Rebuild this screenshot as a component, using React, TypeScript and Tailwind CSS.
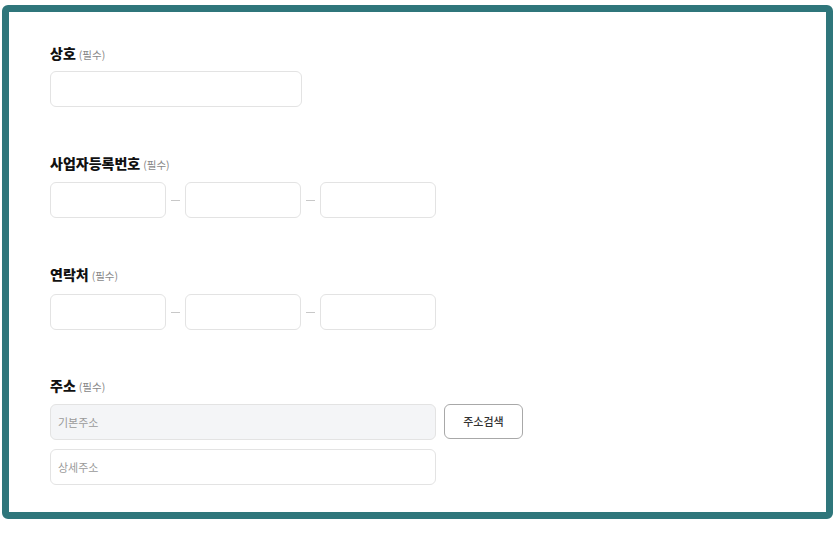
import { FC } from "react";

const font = { fontFamily: '"Noto Sans CJK KR", "Noto Sans", sans-serif' };

const Label: FC<{ title: string }> = ({ title }) => (
	<div className="flex items-baseline h-5 leading-5">
		<span className="text-[14px] font-extrabold text-[#111]">{title}</span>
		<span className="ml-[3px] text-[10.5px] text-[#888]">(필수)</span>
	</div>
);

const Box: FC<{ className?: string; placeholder?: string }> = ({ className = "", placeholder }) => (
	<div
		className={`h-9 rounded-md border border-[#e3e3e3] flex items-center pl-[7px] text-[11px] text-[#9a9a9a] ${className}`}
	>
		{placeholder}
	</div>
);

const Dash: FC = () => (
	<span className="w-[19px] flex justify-center">
		<span className="block w-[9px] h-px bg-[#c8c8c8]" />
	</span>
);

const Split: FC = () => (
	<div className="flex items-center">
		<Box className="w-[116px]" />
		<Dash />
		<Box className="w-[116px]" />
		<Dash />
		<Box className="w-[116px]" />
	</div>
);

const App: FC = () => {
	return (
		<div className="w-[836px] h-[534px] bg-white pt-[5px] pl-[2px]" style={font}>
			<div className="w-[831px] h-[514px] border-[7px] border-[#2f767b] rounded-[6px] pl-[41px] pt-[31px]">
				<Label title="상호" />
				<Box className="w-[252px] mt-[8px]" />

				<div className="mt-[46px]">
					<Label title="사업자등록번호" />
				</div>
				<div className="mt-[9px]">
					<Split />
				</div>

				<div className="mt-[46px]">
					<Label title="연락처" />
				</div>
				<div className="mt-[10px]">
					<Split />
				</div>

				<div className="mt-[45px]">
					<Label title="주소" />
				</div>
				<div className="mt-[9px] flex items-start gap-2">
					<Box className="w-[386px] bg-[#f4f5f7]" placeholder="기본주소" />
					<button className="w-[79px] h-[35px] rounded-md border border-[#a8a8a8] bg-white text-[11px] font-medium text-[#333]">
						주소검색
					</button>
				</div>
				<Box className="w-[386px] mt-[9px]" placeholder="상세주소" />
			</div>
		</div>
	);
};

export default App;
